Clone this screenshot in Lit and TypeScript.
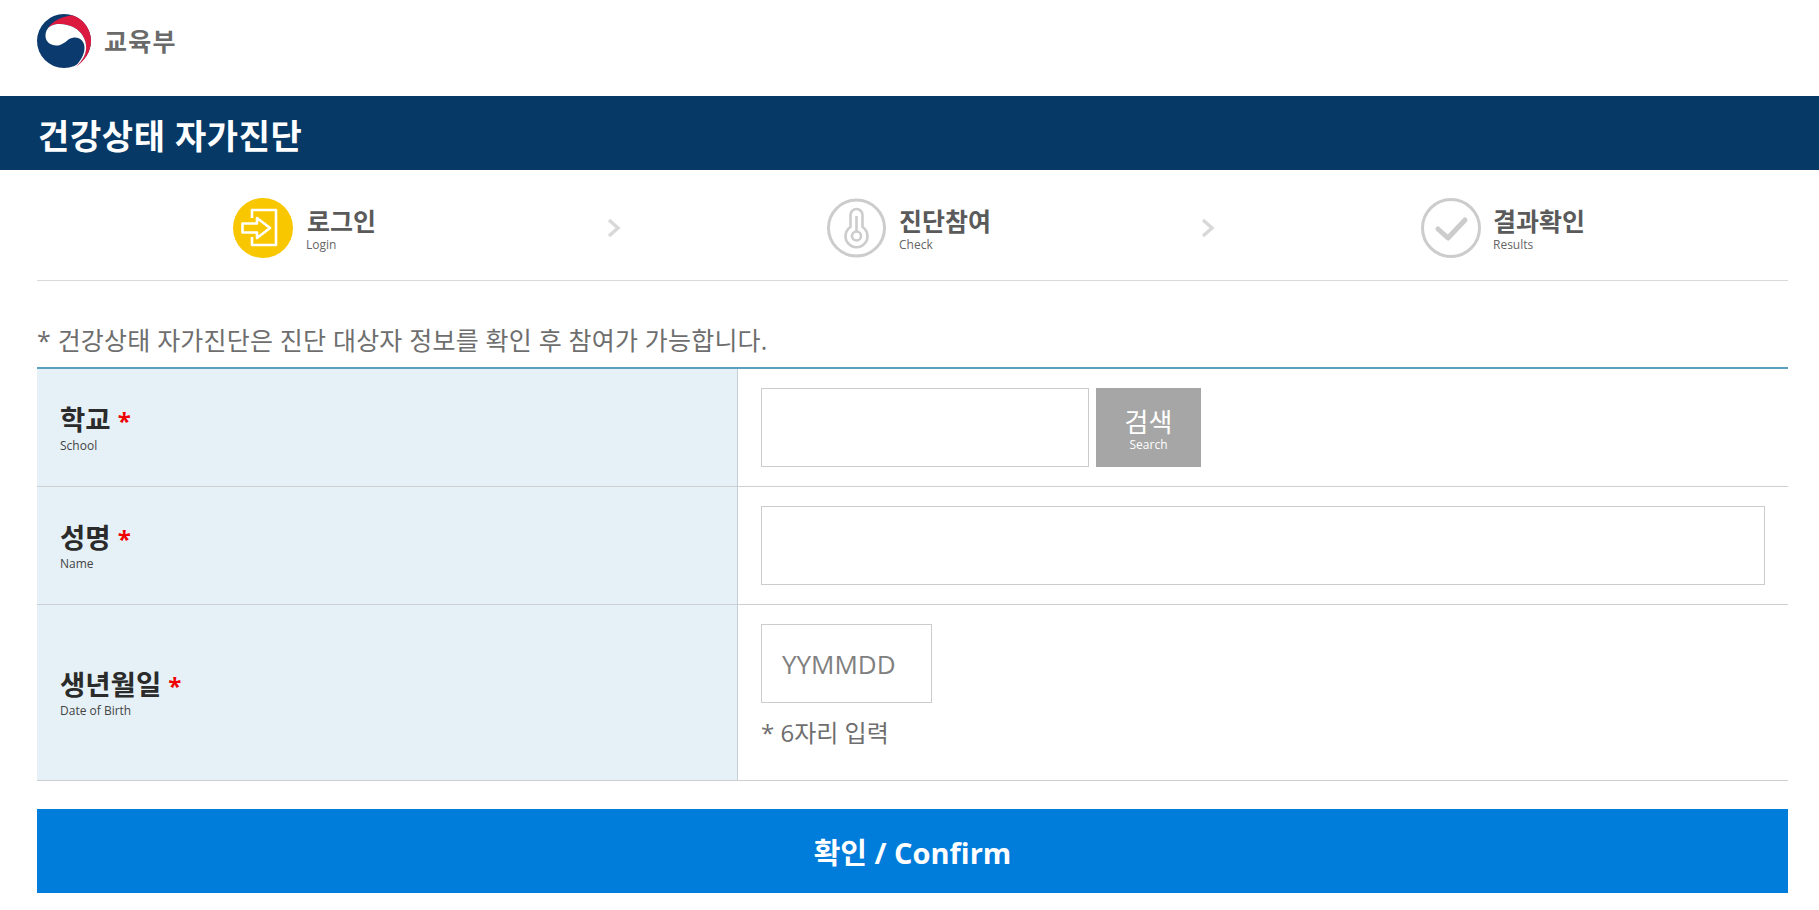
import { LitElement, html, css, svg } from "lit";
import { customElement } from "lit/decorators.js";

const logo = svg`<svg class="logo-mark" viewBox="0 0 54 54" width="54" height="54">
  <circle cx="27" cy="27" r="27" fill="#0a3a6e"/>
  <path fill="#dc1a40" d="M10.5 15 C14 8 24 2.5 35 1.2 C46 4 54 15 54 27 C54 38 47 48 38 53 C46 47 50 39 49 31 C48 21 40 13 30 11 C22 9 14 10 10.5 15Z"/>
  <path fill="#fff" d="M10.5 15 C14 10 22 9 30 11 C40 13 48 21 49 31 C50 39 46 47 38 53 C43 47 47.5 41 47.5 34 C48 28 43 23 37 23.5 C31 24 29 29 23 31 C16 33 8.5 29 8.5 22 C8.5 19 9 17 10.5 15Z"/>
</svg>`;

const loginIcon = svg`<svg viewBox="0 0 60 60" width="60" height="60">
  <circle cx="30" cy="30" r="30" fill="#f8c700"/>
  <path fill="none" stroke="#fff" stroke-width="2.6" stroke-linejoin="round" d="M19 20 V12 H43 V47 H19 V39"/>
  <path fill="none" stroke="#fff" stroke-width="2.6" stroke-linejoin="round" d="M9.5 25.5 H24 V20 L37 30 L24 40 V34.5 H9.5 Z"/>
</svg>`;

const thermoIcon = svg`<svg viewBox="0 0 60 60" width="60" height="60" fill="none" stroke="#ccc">
  <circle cx="29.5" cy="30" r="28" stroke-width="3"/>
  <path stroke-width="2.6" d="M23.5 29 V17 a6 6 0 0 1 12 0 V29 a11 11 0 1 1 -12 0 Z"/>
  <circle cx="29.5" cy="38" r="4.5" stroke-width="2.6"/>
  <path stroke-width="2.6" d="M29.5 33.5 V18"/>
</svg>`;

const checkIcon = svg`<svg viewBox="0 0 60 60" width="60" height="60" fill="none" stroke="#ccc">
  <circle cx="30" cy="30" r="28.5" stroke-width="3"/>
  <path stroke-width="5" stroke-linecap="round" stroke-linejoin="round" d="M17 31 L27 40 L44 22"/>
</svg>`;

const chevron = svg`<svg class="chev" viewBox="0 0 14 20" width="14" height="20" fill="none" stroke="#d8d8d8" stroke-width="3.4"><path d="M2 2 L11 10 L2 18"/></svg>`;

const FONT = css`"Open Sans", "Noto Sans CJK KR", "Noto Sans", sans-serif`;

@customElement("app-root")
export class AppRoot extends LitElement {
  static styles = css`
    :host { display: block; height: 910px; overflow: hidden; background: #fff; font-family: ${FONT}; color: #555; }
    * { box-sizing: border-box; }
    .top { height: 96px; padding: 14px 0 0 37px; display: flex; align-items: flex-start; gap: 13px; }
    .logo-mark { flex: none; }
    .ministry { font-size: 25px; font-weight: 700; color: #6a6a6a; line-height: 54px; letter-spacing: 1.2px; }
    .band { height: 74px; background: #063966; color: #fff; font-size: 34px; font-weight: 700; letter-spacing: 0.6px; padding: 2px 0 0 38px; display: flex; align-items: center; }
    .wrap { padding: 0 31px 0 37px; }
    .steps { height: 111px; border-bottom: 1px solid #d9d9d9; display: grid; grid-template-columns: 594px 594px 1fr; }
    .step { padding: 28px 10px 0 196px; display: flex; align-items: flex-start; }
    .step svg:first-child { flex: none; }
    .step-text { margin-left: 12px; display: flex; flex-direction: column; }
    .step:first-child .step-text { margin-left: 14px; }
    .step-title { font-size: 25px; font-weight: 700; color: #5a5a5a; line-height: 30px; margin-top: 8px; }
    .step-sub { font-size: 12px; color: #666; line-height: 16px; margin-top: 1px; }
    .step:first-child .step-sub { margin-left: -1px; }
    .chev { margin: 20px 0 0 auto; flex: none; }
    .notice { font-size: 25px; font-weight: 400; letter-spacing: 0.2px; color: #6e6e6e; line-height: 32px; padding-top: 43px; height: 86px; white-space: nowrap; }
    .table { border-top: 2px solid #5a9fbb; }
    .row { display: grid; grid-template-columns: 701px 1fr; border-bottom: 1px solid #ccd0d3; }
    .r1, .r2 { height: 118px; }
    .r3 { height: 176px; }
    .label { background: #e6f1f7; border-right: 1px solid #c5ced3; padding: 2px 0 0 23px; display: flex; flex-direction: column; justify-content: center; }
    .name { font-size: 27.5px; font-weight: 700; color: #2b2b2b; line-height: 32px; }
    .name b { color: #f00000; font-weight: 700; font-size: 24px; }
    .en { font-size: 12px; color: #444; line-height: 16px; margin-top: 1px; }
    .cell { padding: 19px 23px 0 23px; }
    .cols { display: flex; gap: 7px; }
    .input { display: flex; align-items: center; height: 79px; border: 1px solid #ccc; background: #fff; font-size: 26px; color: #808080; padding-left: 20px; }
    .w1 { width: 328px; }
    .w2 { width: 100%; }
    .w3 { width: 171px; }
    .search { width: 105px; height: 79px; background: #a6a6a6; color: #fff; display: flex; flex-direction: column; align-items: center; justify-content: center; }
    .search span:first-child { font-size: 26px; line-height: 30px; margin-top: 4px; }
    .search span:last-child { font-size: 12px; line-height: 16px; }
    .hint { font-size: 24px; color: #6e6e6e; line-height: 34px; margin-top: 13px; }
    .confirm { height: 84px; margin-top: 28px; background: #007cdb; color: #fff; font-size: 29px; font-weight: 700; display: flex; align-items: center; justify-content: center; }
  `;

  render() {
    return html`
      <div class="top">${logo}<span class="ministry">교육부</span></div>
      <div class="band">건강상태 자가진단</div>
      <div class="wrap">
        <div class="steps">
          <div class="step">${loginIcon}<div class="step-text"><span class="step-title">로그인</span><span class="step-sub">Login</span></div>${chevron}</div>
          <div class="step">${thermoIcon}<div class="step-text"><span class="step-title">진단참여</span><span class="step-sub">Check</span></div>${chevron}</div>
          <div class="step">${checkIcon}<div class="step-text"><span class="step-title">결과확인</span><span class="step-sub">Results</span></div></div>
        </div>
        <div class="notice">* 건강상태 자가진단은 진단 대상자 정보를 확인 후 참여가 가능합니다.</div>
        <div class="table">
          <div class="row r1">
            <div class="label"><span class="name">학교 <b>*</b></span><span class="en">School</span></div>
            <div class="cell"><div class="cols"><div class="input w1"></div><div class="search"><span>검색</span><span>Search</span></div></div></div>
          </div>
          <div class="row r2">
            <div class="label"><span class="name">성명 <b>*</b></span><span class="en">Name</span></div>
            <div class="cell"><div class="input w2"></div></div>
          </div>
          <div class="row r3">
            <div class="label"><span class="name">생년월일 <b>*</b></span><span class="en">Date of Birth</span></div>
            <div class="cell"><div class="input w3">YYMMDD</div><div class="hint">* 6자리 입력</div></div>
          </div>
        </div>
        <div class="confirm">확인 / Confirm</div>
      </div>
    `;
  }
}
